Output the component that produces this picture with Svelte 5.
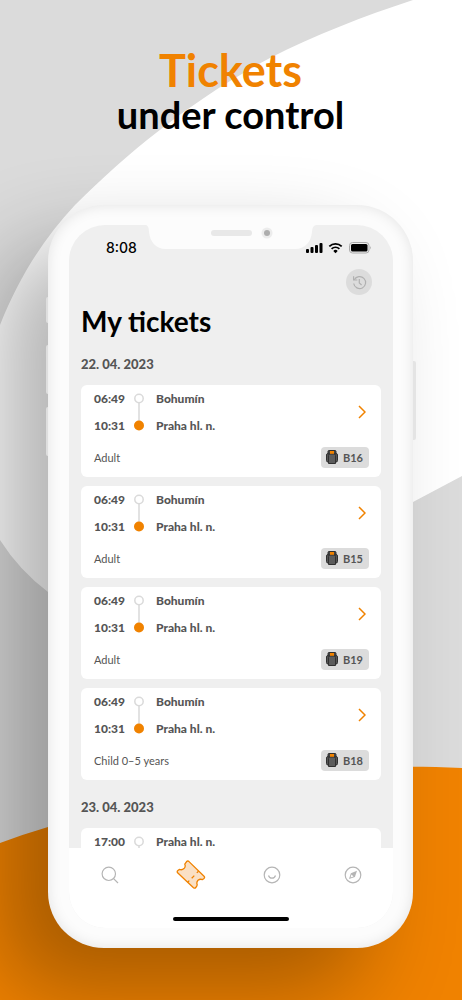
<script>
  const days = [
    {
      date: '22. 04. 2023',
      tickets: [
        { departure: '06:49', arrival: '10:31', from: 'Bohumín', to: 'Praha hl. n.', fare: 'Adult', seat: 'B16' },
        { departure: '06:49', arrival: '10:31', from: 'Bohumín', to: 'Praha hl. n.', fare: 'Adult', seat: 'B15' },
        { departure: '06:49', arrival: '10:31', from: 'Bohumín', to: 'Praha hl. n.', fare: 'Adult', seat: 'B19' },
        { departure: '06:49', arrival: '10:31', from: 'Bohumín', to: 'Praha hl. n.', fare: 'Child 0–5 years', seat: 'B18' },
      ],
    },
    {
      date: '23. 04. 2023',
      tickets: [{ departure: '17:00', from: 'Praha hl. n.' }],
    },
  ];

  const tabs = ['Search', 'Tickets', 'Profile', 'Explore'];
  let activeTab = $state('Tickets');
</script>

<main class="promo">
  <svg class="backdrop" viewBox="0 0 462 1000" preserveAspectRatio="none" aria-hidden="true">
    <path
      d="M413 0 C 364 16 315 35 270 58 C 195 98 130 150 75 205 C 42 240 18 280 0 325 V 540 Q 19 570 48 592 C 130 640 290 570 413 502 L 462 476 V 0 Z"
      fill="#fff"
    />
    <path d="M0 843 Q 24 834 48 827 C 170 788 310 760 462 768 V 1000 H 0 Z" fill="#f08200" />
  </svg>

  <h1 class="headline"><span>Tickets</span> under control</h1>

  <div class="phone">
    <i class="key mute"></i>
    <i class="key up"></i>
    <i class="key down"></i>
    <i class="key power"></i>

    <div class="screen">
      <div class="notch">
        <svg viewBox="0 0 170 24" aria-hidden="true">
          <path d="M0 0 Q 3 1 3 7 C 4 17 10 24 20 24 H 149 C 159 24 165 17 166 7 Q 166 1 170 0 Z" fill="#fcfcfc" />
          <rect x="65" y="5" width="41" height="6" rx="3" fill="#e8e8e8" />
          <circle cx="121" cy="8" r="5.5" fill="#ececec" />
          <circle cx="121" cy="8" r="3" fill="#adadad" />
        </svg>
      </div>

      <header class="status">
        <span>8:08</span>
        <svg width="66" height="13" viewBox="0 0 66 13" aria-hidden="true">
          <rect x="0" y="8" width="3" height="4" rx="1" />
          <rect x="4.500" y="6" width="3" height="6" rx="1" />
          <rect x="9" y="4" width="3" height="8" rx="1" />
          <rect x="13.500" y="2" width="3" height="10" rx="1" />
          <g fill="none" stroke="#000" stroke-width="1.800">
            <path d="M23.300 5.300 a9 9 0 0 1 12.400 0" />
            <path d="M25.600 7.900 a5.800 5.800 0 0 1 7.800 0" />
          </g>
          <path d="M27.300 9.900 a3 3 0 0 1 4.400 0 L29.500 12.200 Z" />
          <rect x="43.500" y="1.500" width="19.500" height="10.500" rx="3" fill="#efefef" stroke="#aaa" />
          <rect x="45" y="3" width="16.500" height="7.500" rx="1.500" />
          <path d="M64 5 q1.800 1.700 0 3.500 Z" fill="#aaa" />
        </svg>
      </header>

      <div class="toolbar">
        <button class="history" aria-label="Ticket history">
          <svg width="15" height="15" viewBox="0 0 15 15" fill="none" stroke="#b0b0b0" stroke-width="1.200">
            <path d="M2.300 4.800 A6 6 0 1 1 1.700 8.500" />
            <path d="M1.600 1.200 V5 H5.300" />
            <path d="M7.300 4 V8 L9.600 10" />
          </svg>
        </button>
      </div>

      <div class="content">
        <h2>My tickets</h2>
        {#each days as day}
          <section>
            <h3>{day.date}</h3>
            {#each day.tickets as ticket}
              <a class="ticket" href="#ticket">
                <div class="route">
                  <time>{ticket.departure}</time>
                  <svg class="rail" width="10" height="38" viewBox="0 0 10 38" aria-hidden="true">
                    <path d="M5 10 V28" stroke="#d8d8d8" stroke-width="1.500" />
                    <circle cx="5" cy="5.500" r="4.200" fill="#fff" stroke="#dadada" stroke-width="1.500" />
                    <circle cx="5" cy="32.500" r="5" fill="#f08200" />
                  </svg>
                  <span>{ticket.from}</span>
                  {#if ticket.arrival}
                    <time>{ticket.arrival}</time>
                    <span>{ticket.to}</span>
                  {/if}
                  <svg class="chevron" width="8" height="14" viewBox="0 0 8 14" aria-hidden="true">
                    <path d="M1 1 L7 7 L1 13" fill="none" stroke="#f08200" stroke-width="1.500" />
                  </svg>
                </div>
                {#if ticket.fare}
                  <div class="details">
                    <span>{ticket.fare}</span>
                    <span class="seat">
                      <svg width="12" height="14" viewBox="0 0 12 14" aria-hidden="true">
                        <rect x="0.500" y="3.500" width="11" height="8.500" rx="1.500" fill="#555" stroke="#303030" />
                        <path d="M2 1.500 Q2 0.500 3 0.500 H9 Q10 0.500 10 1.500 V4 H2 Z" fill="#444" stroke="#303030" />
                        <path d="M2.500 5.500 Q2.500 4 4 4 H8 Q9.500 4 9.500 5.500 V13.500 H2.500 Z" fill="#5c5c5c" stroke="#303030" />
                        <rect x="4" y="1" width="4" height="2.800" fill="#f08200" />
                      </svg>
                      {ticket.seat}
                    </span>
                  </div>
                {/if}
              </a>
            {/each}
          </section>
        {/each}
      </div>

      <nav>
        {#each tabs as tab}
          <button aria-label={tab} aria-current={activeTab === tab} onclick={() => (activeTab = tab)}>
            {#if tab === 'Search'}
              <svg width="18" height="18" viewBox="0 0 18 18" fill="none" stroke="#b5b5b5" stroke-width="1.200">
                <circle cx="7.800" cy="7.800" r="6.700" />
                <path d="M12.600 12.600 L17 17" />
              </svg>
            {:else if tab === 'Tickets'}
              <svg width="30" height="30" viewBox="0 0 30 30" fill="none" stroke="#f08200" stroke-width="1.300" stroke-linejoin="round">
                <path
                  d="M10.600 1.600 Q11.800 0.500 13 1.600 L28.300 16.500 Q29 17.500 28 18.500 L26.600 19.600 Q24 18.600 22 20.300 Q20.200 22.300 21.200 24.800 Q21.200 26 19.800 27.500 Q18.800 28.700 17.500 27.700 L1.600 12.800 Q0.700 11.600 1.900 10.600 L3.300 9.400 Q6 10.400 8 8.600 Q9.900 6.600 8.800 4.200 Z"
                  fill="#fae0c4"
                />
                <path d="M22.500 11.200 L20.800 12.900 M18.300 15.600 L15.700 18.200 M13.300 20.600 L11.600 22.300" />
              </svg>
            {:else if tab === 'Profile'}
              <svg width="18" height="18" viewBox="0 0 18 18" fill="none" stroke="#b5b5b5" stroke-width="1.200">
                <circle cx="9" cy="9" r="7.800" />
                <path d="M5.500 9.500 Q6.300 12.200 9 12.200 Q11.700 12.200 12.500 9.500" />
              </svg>
            {:else}
              <svg width="18" height="18" viewBox="0 0 18 18" fill="none" stroke="#b5b5b5" stroke-width="1.200">
                <circle cx="9" cy="9" r="7.800" />
                <path d="M13 4.800 L10.900 11 L5 13 L6.900 7.300 Z" fill="#b5b5b5" stroke="none" />
                <path d="M6.500 11.500 L7.500 8.500 L9.500 10.500 Z" fill="#fff" stroke="none" />
              </svg>
            {/if}
          </button>
        {/each}
      </nav>
      <div class="home"></div>
    </div>
  </div>
</main>

<style>
  :global(body) {
    margin: 0;
    background: #dbdbdb;
  }

  .promo {
    position: relative;
    overflow: hidden;
    padding: 47px 49px 52px 48px;
    font-family: Lato, 'Liberation Sans', sans-serif;
  }

  .backdrop {
    position: absolute;
    inset: 0;
    width: 100%;
    height: 100%;
  }

  .headline {
    position: relative;
    margin: 0 0 70px;
    color: #000;
    font-size: 38px;
    font-weight: 700;
    line-height: 42px;
    text-align: center;
  }

  .headline span {
    display: block;
    color: #f08200;
    font-size: 45px;
    line-height: 46px;
  }

  .phone {
    position: relative;
    box-sizing: border-box;
    max-width: 365px;
    margin: 0 auto;
    padding: 20px 20px 20px 21px;
    border-radius: 56px;
    background: #fcfcfc;
    box-shadow:
      inset 0 0 14px rgba(0, 0, 0, 0.1),
      -48px 44px 90px rgba(0, 0, 0, 0.3);
  }

  .key {
    position: absolute;
    left: -2px;
    width: 2px;
    border-radius: 2px 0 0 2px;
    background: #dedede;
  }

  .mute {
    top: 92px;
    height: 26px;
  }

  .up {
    top: 140px;
    height: 49px;
  }

  .down {
    top: 202px;
    height: 49px;
  }

  .power {
    top: 156px;
    right: -3px;
    left: auto;
    width: 3px;
    height: 79px;
    border-radius: 0 2px 2px 0;
    background: #e4e4e4;
  }

  .screen {
    position: relative;
    display: flex;
    flex-direction: column;
    aspect-ratio: 324 / 703;
    overflow: hidden;
    border-radius: 36px;
    background: #efefef;
  }

  .notch {
    position: absolute;
    top: 0;
    left: 0;
    right: 0;
    display: flex;
    justify-content: center;
  }

  .notch svg {
    width: 170px;
    height: 24px;
  }

  .status {
    display: flex;
    align-items: center;
    justify-content: space-between;
    height: 44px;
    padding: 0 21px 0 37px;
    color: #000;
    font-family: Inter, sans-serif;
    font-size: 14px;
    font-weight: 500;
  }

  .toolbar {
    display: flex;
    justify-content: flex-end;
    padding: 0 21px;
  }

  button {
    display: flex;
    align-items: center;
    justify-content: center;
    padding: 0;
    border: 0;
    background: none;
    cursor: pointer;
  }

  .history {
    width: 26px;
    height: 26px;
    border-radius: 50%;
    background: #dcdcdc;
  }

  .content {
    flex: 1;
    min-height: 0;
    padding: 8px 12px 0;
    overflow-y: auto;
    scrollbar-width: none;
  }

  h2 {
    margin: 0 0 7px;
    color: #000;
    font-size: 28px;
    font-weight: 700;
    line-height: 36px;
  }

  h3 {
    margin: 0;
    padding: 8px 0 11px;
    color: #555;
    font-size: 13px;
    font-weight: 900;
    line-height: 20px;
  }

  .ticket {
    display: block;
    box-sizing: border-box;
    height: 92px;
    margin-bottom: 9px;
    padding: 0 12px 0 13px;
    border-radius: 6px;
    background: #fff;
    color: #555;
    font-size: 12px;
    text-decoration: none;
  }

  .route {
    display: grid;
    grid-template-columns: 40px 10px 1fr 8px;
    grid-template-rows: 27px 27px;
    align-items: center;
    padding-right: 3px;
    font-weight: 900;
    line-height: 12px;
  }

  .rail {
    grid-row: 1 / 3;
    grid-column: 2;
  }

  .route span {
    grid-column: 3;
    padding-left: 12px;
  }

  .route time {
    grid-column: 1;
  }

  .chevron {
    grid-row: 1 / 3;
    grid-column: 4;
  }

  .details {
    display: flex;
    align-items: center;
    justify-content: space-between;
    height: 36px;
    font-size: 11px;
  }

  .seat {
    display: flex;
    align-items: center;
    gap: 5px;
    padding: 0 6px 0 5px;
    border-radius: 4px;
    background: #dcdcdc;
    font-weight: 700;
    line-height: 21px;
  }

  nav {
    display: grid;
    grid-template-columns: repeat(4, 1fr);
    height: 54px;
    background: #fff;
  }

  .home {
    padding: 15px 0 7px;
    background: #fff;
  }

  .home::before {
    content: '';
    display: block;
    width: 116px;
    height: 4px;
    margin: 0 auto;
    border-radius: 2px;
    background: #000;
  }
</style>
